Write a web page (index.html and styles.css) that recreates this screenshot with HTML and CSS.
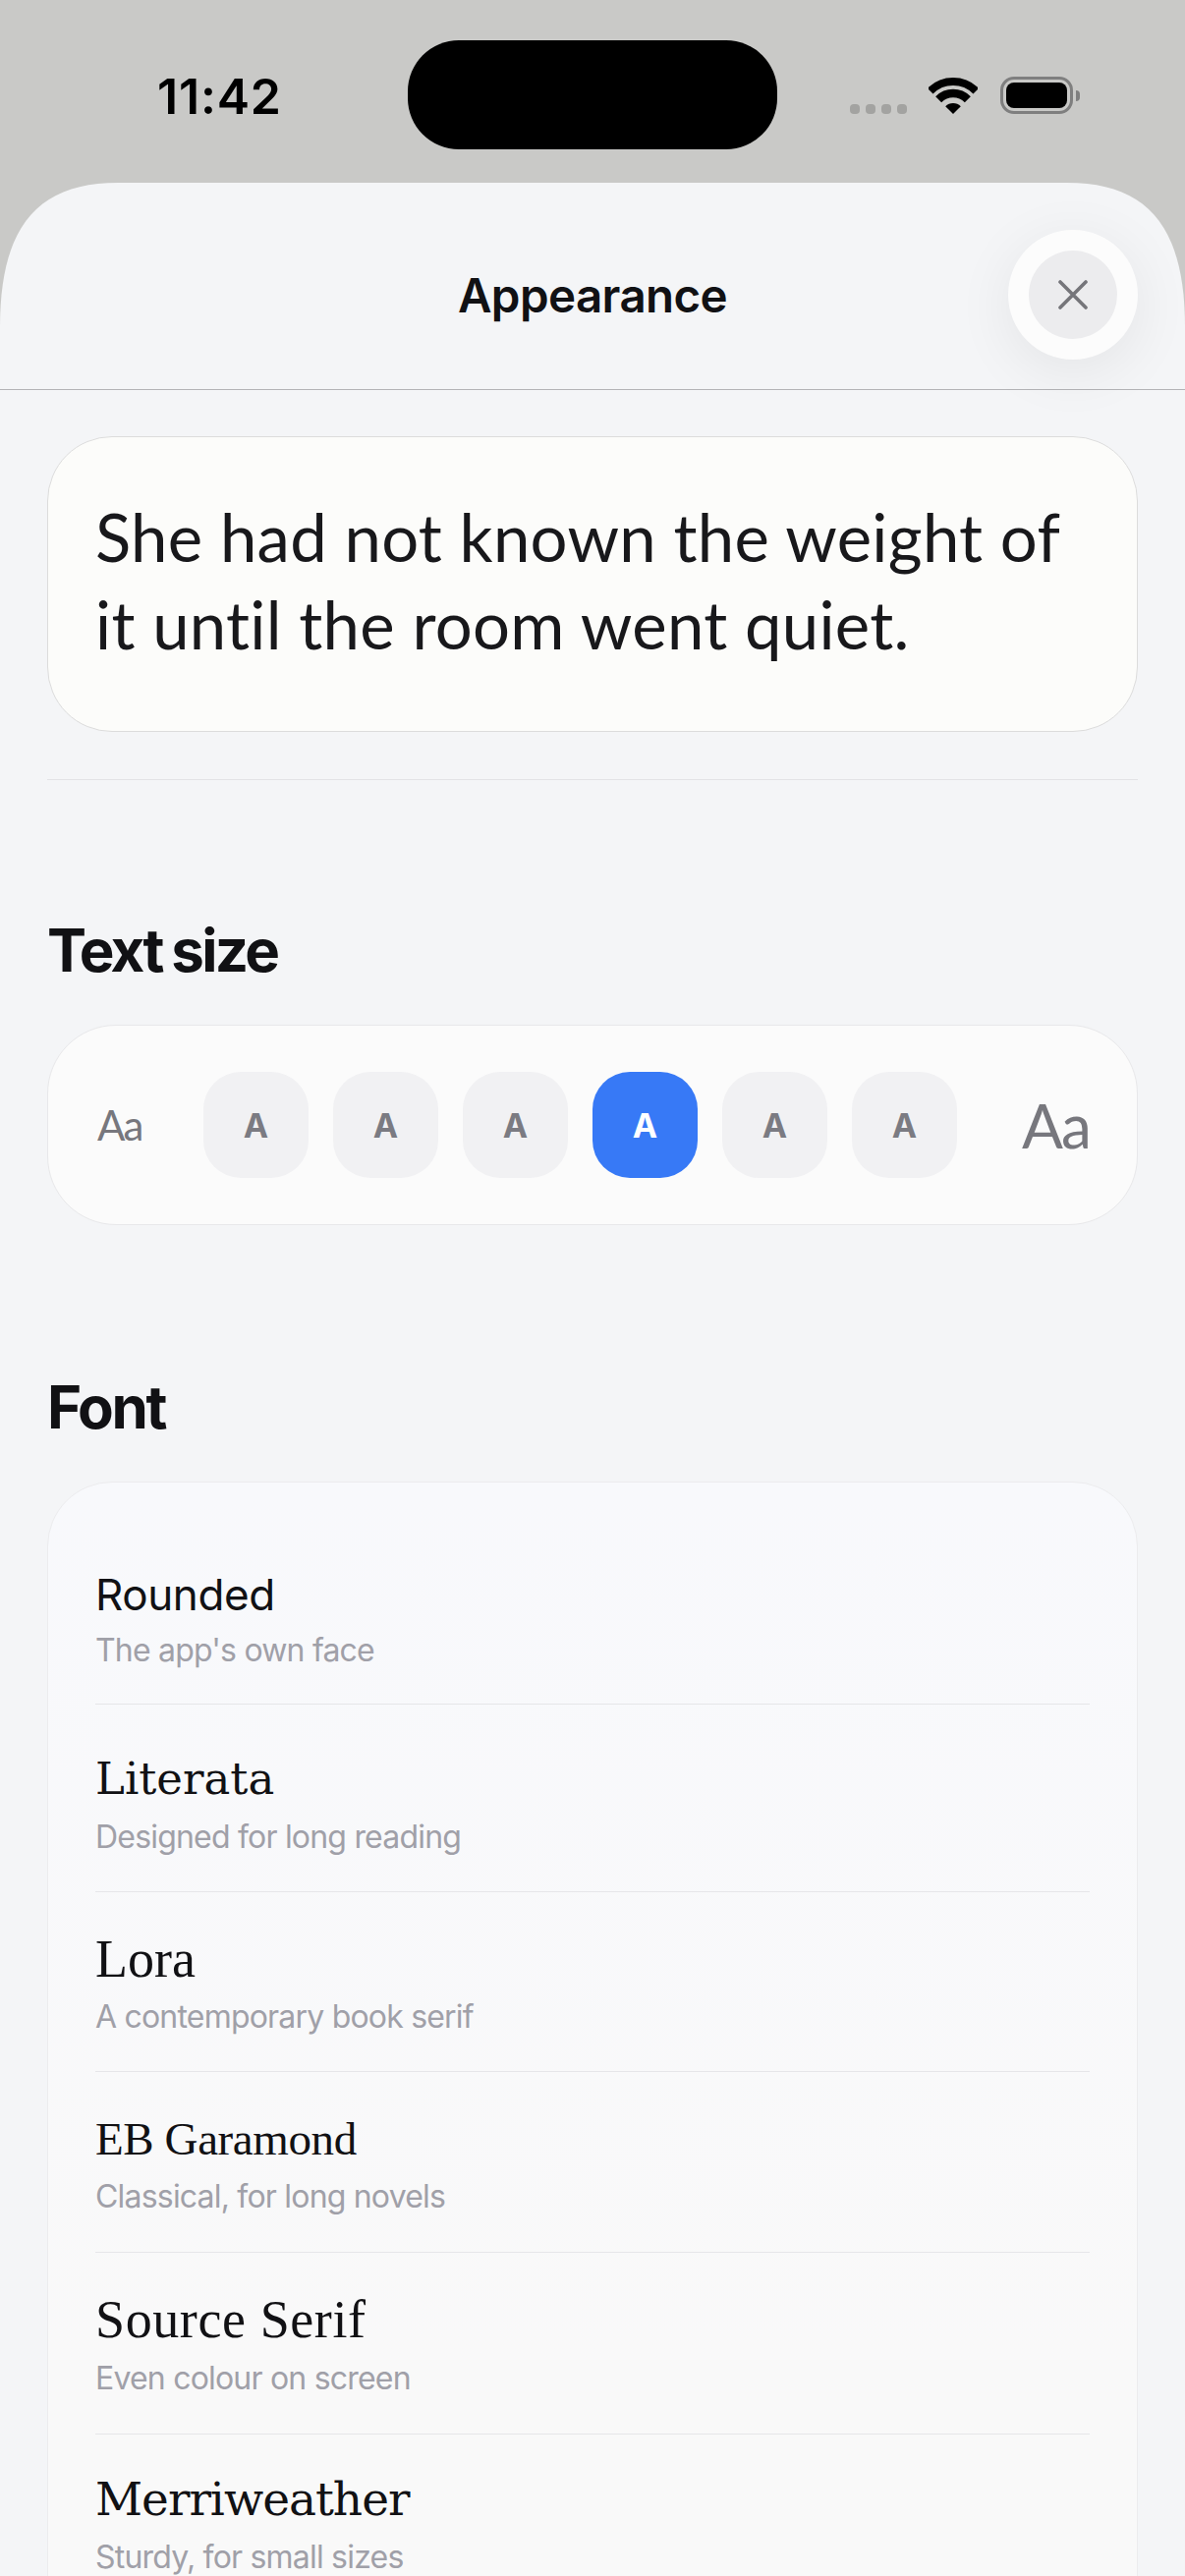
FILE: index.html
```html
<!DOCTYPE html>
<html lang="en">
<head>
    <meta charset="UTF-8">
    <meta name="viewport" content="width=device-width, initial-scale=1.0">
    <title>Appearance</title>
    <link rel="stylesheet" href="styles.css">
</head>
<body>
    <div class="status-bar">
        <span class="time">11:42</span>
        <div class="island"></div>
        <div class="status-icons">
            <div class="signal"><i></i><i></i><i></i><i></i></div>
            <svg class="wifi" width="50" height="37" viewBox="0 0 50 37">
                <path d="M1.7 13.7A33 33 0 0 1 48.3 13.7" fill="none" stroke="#000" stroke-width="8"/>
                <path d="M10.15 22.15A21 21 0 0 1 39.85 22.15" fill="none" stroke="#000" stroke-width="8.5"/>
                <path d="M25 37L17.2 29.2A11 11 0 0 1 32.8 29.2Z" fill="#000"/>
            </svg>
            <div class="battery"><div class="battery-fill"></div></div>
            <div class="battery-tip"></div>
        </div>
    </div>

    <div class="sheet">
        <header class="sheet-header">
            <h1>Appearance</h1>
            <button class="close-ring">
                <span class="close-btn">
                    <svg width="30" height="30" viewBox="0 0 30 30">
                        <path d="M2 2L28 28M28 2L2 28" stroke="#75757a" stroke-width="3.6" stroke-linecap="round"/>
                    </svg>
                </span>
            </button>
        </header>

        <div class="content">
            <div class="preview">She had not known the weight of it until the room went quiet.</div>
            <div class="divider"></div>

            <h2 class="section-title size-title">Text size</h2>
            <div class="size-card">
                <span class="aa aa-small">Aa</span>
                <div class="size-steps">
                    <span class="step">A</span>
                    <span class="step">A</span>
                    <span class="step">A</span>
                    <span class="step active">A</span>
                    <span class="step">A</span>
                    <span class="step">A</span>
                </div>
                <span class="aa aa-large">Aa</span>
            </div>

            <h2 class="section-title font-title">Font</h2>
            <div class="font-card">
                <div class="font-row row-rounded">
                    <div class="font-name">Rounded</div>
                    <div class="font-note">The app's own face</div>
                </div>
                <div class="font-row row-literata">
                    <div class="font-name">Literata</div>
                    <div class="font-note">Designed for long reading</div>
                </div>
                <div class="font-row row-lora">
                    <div class="font-name">Lora</div>
                    <div class="font-note">A contemporary book serif</div>
                </div>
                <div class="font-row row-garamond">
                    <div class="font-name">EB Garamond</div>
                    <div class="font-note">Classical, for long novels</div>
                </div>
                <div class="font-row row-source">
                    <div class="font-name">Source Serif</div>
                    <div class="font-note">Even colour on screen</div>
                </div>
                <div class="font-row row-merri">
                    <div class="font-name">Merriweather</div>
                    <div class="font-note">Sturdy, for small sizes</div>
                </div>
            </div>
        </div>
    </div>
</body>
</html>
```

FILE: styles.css
```css
html, body {
    margin: 0;
    height: 2622px;
    overflow: hidden;
}
body {
    font-family: Inter, "Liberation Sans", sans-serif;
    background-color: #c9c9c7;
    color: #111114;
}
h1, h2 {
    margin: 0;
}

/* status bar */
.status-bar {
    height: 186px;
    display: flex;
    align-items: flex-start;
}
.time {
    width: 125px;
    margin: 66px 0 0 160px;
    font-size: 50px;
    line-height: 64px;
    font-weight: 600;
    letter-spacing: 0.8px;
    white-space: nowrap;
    color: #000;
}
.island {
    width: 376px;
    height: 111px;
    margin: 41px 0 0 130px;
    background-color: #000;
    border-radius: 52px;
}
.status-icons {
    display: flex;
    align-items: flex-end;
    margin: 78px 0 0 74px;
    height: 38px;
}
.signal {
    display: flex;
    gap: 6px;
    margin-right: 22px;
}
.signal i {
    width: 10px;
    height: 10px;
    border-radius: 4px;
    background-color: #a3a3a1;
}
.wifi {
    margin-right: 23px;
}
.battery {
    box-sizing: border-box;
    width: 74px;
    height: 38px;
    padding: 3px;
    border: 3px solid #7f7f7f;
    border-radius: 14px;
}
.battery-fill {
    height: 100%;
    background-color: #000;
    border-radius: 8px;
}
.battery-tip {
    width: 4px;
    height: 11px;
    margin: 0 0 13px 3px;
    background-color: #7f7f7f;
    border-radius: 0 4px 4px 0;
}

/* sheet */
.sheet {
    height: 2436px;
    background-color: #f4f5f7;
    clip-path: path("M0 147C0 45 38 0 120 0H1086C1168 0 1206 45 1206 147V2436H0Z");
}
.sheet-header {
    box-sizing: border-box;
    height: 211px;
    padding-top: 18px;
    display: grid;
    grid-template-columns: 1fr auto 1fr;
    align-items: center;
    border-bottom: 1px solid #b4b4b7;
}
.sheet-header h1 {
    grid-column: 2;
    margin-top: 2px;
    font-size: 47.5px;
    font-weight: 600;
    letter-spacing: -0.6px;
    line-height: 60px;
}
.close-ring {
    grid-column: 3;
    justify-self: end;
    width: 132px;
    height: 132px;
    margin: 0 48px 0 0;
    padding: 0;
    border: none;
    border-radius: 50%;
    background-color: #fcfcfc;
    box-shadow: 0 12px 60px rgba(0, 0, 0, 0.07);
    display: flex;
    align-items: center;
    justify-content: center;
}
.close-btn {
    width: 90px;
    height: 90px;
    border-radius: 50%;
    background-color: #ececee;
    display: flex;
    align-items: center;
    justify-content: center;
}

.content {
    padding: 47px 48px 0;
}
.preview {
    box-sizing: border-box;
    height: 301px;
    padding: 57px 48px 0;
    background-color: #fcfcfa;
    border: 1px solid #dcdcdc;
    border-radius: 66px;
    font-family: Lato, "Noto Sans", sans-serif;
    font-size: 67px;
    letter-spacing: 0.3px;
    font-variant-ligatures: none;
    line-height: 89px;
    color: #18181b;
}
.divider {
    height: 1px;
    margin-top: 48px;
    background-color: #e3e3e6;
}

.section-title {
    font-size: 60px;
    font-weight: 700;
    letter-spacing: -2.4px;
    line-height: 72px;
}
.size-title {
    margin-top: 137px;
    letter-spacing: -2.7px;
    word-spacing: -2px;
}
.font-title {
    margin-top: 149px;
}

/* text size picker */
.size-card {
    box-sizing: border-box;
    height: 204px;
    margin-top: 40px;
    padding-left: 50px;
    display: flex;
    align-items: center;
    background-color: #fbfbfb;
    border: 1px solid #e8e8ea;
    border-radius: 70px;
}
.aa {
    font-family: Lato, "Noto Sans", sans-serif;
    color: #77777d;
    letter-spacing: -2px;
}
.aa-small {
    width: 108px;
    font-size: 42px;
}
.aa-large {
    margin-left: 66px;
    font-size: 62px;
}
.size-steps {
    display: flex;
    gap: 25px;
}
.step {
    width: 107px;
    height: 108px;
    border-radius: 38px;
    background-color: #f1f1f3;
    display: flex;
    align-items: center;
    justify-content: center;
    font-size: 34px;
    font-weight: 700;
    color: #7b7b82;
}
.step.active {
    background-color: #3779f6;
    color: #fff;
}

/* font list */
.font-card {
    box-sizing: border-box;
    height: 1200px;
    margin-top: 40px;
    padding: 48px 48px 0;
    background: linear-gradient(#f8f9fc, #f9f9f9 900px);
    border: 1px solid #ececee;
    border-radius: 66px;
}
.font-row {
    border-bottom: 1px solid #e6e6e9;
}
.font-name {
    font-family: "Liberation Serif", serif;
    color: #111114;
}
.font-note {
    margin-top: 9px;
    font-size: 32px;
    line-height: 40px;
    color: #a0a0a8;
    letter-spacing: -0.8px;
}
.row-rounded { height: 177px; }
.row-rounded .font-name {
    font-family: Inter, sans-serif;
    font-size: 44px;
    letter-spacing: -0.4px;
    line-height: 60px;
    padding-top: 36px;
}
.row-rounded .font-note { margin-top: 7px; }
.row-literata { height: 190px; }
.row-literata .font-name {
    font-family: "DejaVu Serif", serif;
    font-size: 45px;
    line-height: 60px;
    padding-top: 46px;
}
.row-lora { height: 182px; }
.row-lora .font-name {
    font-size: 54px;
    line-height: 60px;
    padding-top: 38px;
}
.row-garamond { height: 183px; }
.row-garamond .font-name {
    font-size: 47px;
    letter-spacing: -0.4px;
    line-height: 60px;
    padding-top: 38px;
}
.row-source { height: 184px; }
.row-source .font-name {
    font-size: 54px;
    letter-spacing: 0.6px;
    line-height: 60px;
    padding-top: 38px;
}
.row-source .font-note { margin-top: 10px; }
.row-merri { border-bottom: none; }
.row-merri .font-name {
    font-family: "DejaVu Serif", serif;
    font-size: 47px;
    letter-spacing: -1px;
    line-height: 60px;
    padding-top: 36px;
}
```
